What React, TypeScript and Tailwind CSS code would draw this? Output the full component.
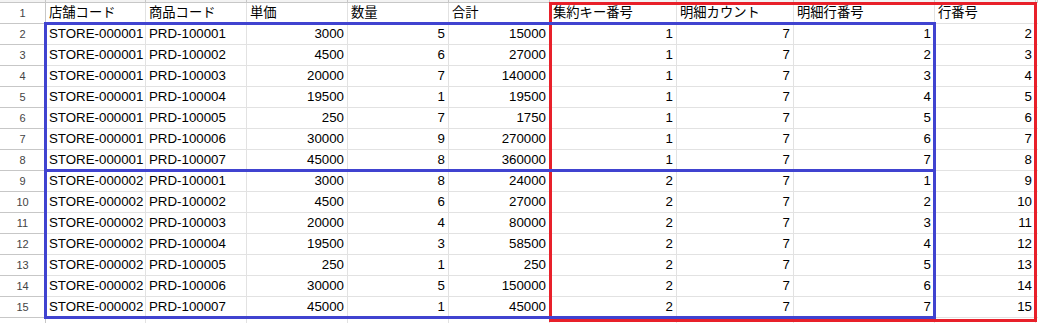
import React from "react";

const prices = [3000, 4500, 20000, 19500, 250, 30000, 45000];
const qty1 = [5, 6, 7, 1, 7, 9, 8];
const qty2 = [8, 6, 4, 3, 1, 5, 1];

type Row = (string | number)[];

const rows: Row[] = [];
[qty1, qty2].forEach((q, g) => {
  for (let i = 0; i < 7; i++) {
    rows.push([
      `STORE-00000${g + 1}`,
      `PRD-10000${i + 1}`,
      prices[i],
      q[i],
      prices[i] * q[i],
      g + 1,
      7,
      i + 1,
      g * 7 + i + 2,
    ]);
  }
});

const headers = ["店舗コード", "商品コード", "単価", "数量", "合計", "集約キー番号", "明細カウント", "明細行番号", "行番号"];

const cols = "grid grid-cols-[46px_100px_101px_101px_101px_101px_127px_117px_141px_101px_1fr]";

export default function App() {
  const font = { fontFamily: '"Liberation Sans", Arial, "Noto Sans CJK JP", sans-serif' };
  return (
    <div className="relative w-[1038px] h-[323px] overflow-hidden bg-white text-black" style={font}>
      {/* top strip: column header remnant */}
      <div className={cols + " h-[3px]"}>
        {Array.from({ length: 11 }).map((_, i) => (
          <div key={i} className="bg-[#f3f3f3] border-r border-b border-[#c7c7c7]" />
        ))}
      </div>
      {/* header row */}
      <div className={cols + " h-[21px]"}>
        <div className="flex items-center justify-center border-r border-b border-[#c7c7c7] bg-white text-[11px] text-[#444]">1</div>
        {headers.map((h, i) => (
          <div key={i} className="flex items-center px-[3px] border-r border-b border-[#e2e2e2] text-[13.3px] whitespace-nowrap overflow-hidden">
            {h}
          </div>
        ))}
        <div className="border-b border-[#e2e2e2]" />
      </div>
      {rows.map((r, ri) => (
        <div key={ri} className={cols + " h-[21px]"}>
          <div className="flex items-center justify-center border-r border-b border-[#c7c7c7] bg-white text-[11px] text-[#444]">
            {ri + 2}
          </div>
          {r.map((c, ci) => (
            <div
              key={ci}
              className={
                "flex items-center px-[3px] border-r border-b border-[#e2e2e2] text-[13.3px] whitespace-nowrap overflow-hidden " +
                (typeof c === "number" ? "justify-end" : "justify-start")
              }
            >
              {c}
            </div>
          ))}
          <div className="border-b border-[#e2e2e2]" />
        </div>
      ))}
      <div className={cols + " h-[21px]"}>
        <div className="border-r border-[#c7c7c7] bg-white" />
        {Array.from({ length: 9 }).map((_, i) => (
          <div key={i} className="border-r border-[#e2e2e2]" />
        ))}
        <div />
      </div>

      {/* selection overlays */}
      <div className="absolute left-[549px] top-[2px] w-[488px] h-[320px] border-[3px] border-[#e8202a] pointer-events-none" />
      <div className="absolute left-[44px] top-[22px] w-[892px] h-[150px] border-[3px] border-[#4043d0] pointer-events-none" />
      <div className="absolute left-[44px] top-[169px] w-[892px] h-[150px] border-[3px] border-[#4043d0] pointer-events-none" />
    </div>
  );
}
